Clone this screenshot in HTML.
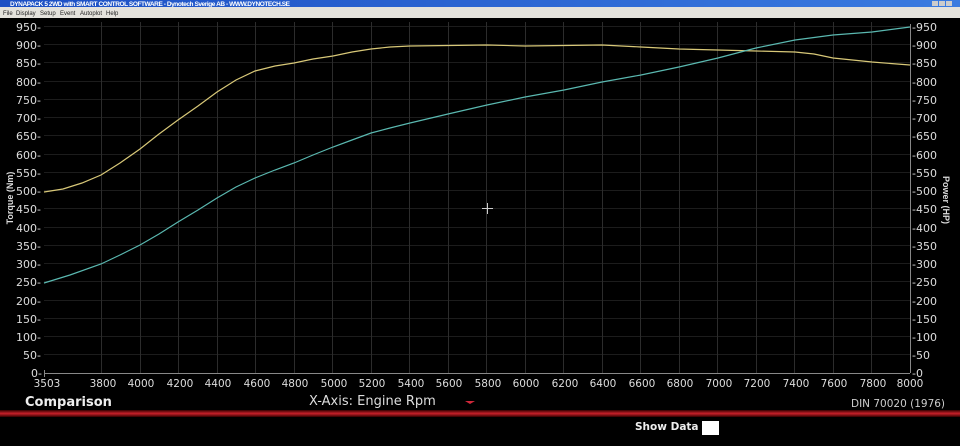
<!DOCTYPE html>
<html><head><meta charset="utf-8"><style>
html,body{margin:0;padding:0;background:#000;width:960px;height:446px;overflow:hidden;font-family:"DejaVu Sans","Liberation Sans",sans-serif}
</style></head><body>
<svg width="960" height="446" xmlns="http://www.w3.org/2000/svg" style="position:absolute;left:0;top:0">
<defs><linearGradient id="tb" x1="0" x2="1"><stop offset="0" stop-color="#1c4fc4"/><stop offset="1" stop-color="#3a7be0"/></linearGradient>
<linearGradient id="rl" x1="0" y1="0" x2="0" y2="1"><stop offset="0" stop-color="#300"/><stop offset="0.5" stop-color="#c8202a"/><stop offset="1" stop-color="#300"/></linearGradient></defs>
<rect x="0" y="0" width="960" height="7" fill="url(#tb)"/>
<text x="10" y="6" font-size="6.5" fill="#fff" font-weight="bold" font-family="Liberation Sans,sans-serif" textLength="280">DYNAPACK 5 2WD with SMART CONTROL SOFTWARE - Dynotech Sverige AB   -   WWW.DYNOTECH.SE</text>
<rect x="932" y="1" width="6" height="5" fill="#ccc"/><rect x="939" y="1" width="6" height="5" fill="#ccc"/><rect x="946" y="1" width="6" height="5" fill="#ccc"/>
<rect x="0" y="7" width="960" height="11" fill="#e4e2dc"/>
<g font-size="6" fill="#222" font-family="Liberation Sans,sans-serif"><text x="3" y="15">File</text><text x="16" y="15">Display</text><text x="40" y="15">Setup</text><text x="60" y="15">Event</text><text x="80" y="15">Autoplot</text><text x="106" y="15">Help</text></g>
<g stroke="#1c1c1c" stroke-width="1">
<line x1="44" x2="910" y1="26.5" y2="26.5"/><line x1="44" x2="910" y1="44.5" y2="44.5"/><line x1="44" x2="910" y1="62.5" y2="62.5"/><line x1="44" x2="910" y1="81.5" y2="81.5"/><line x1="44" x2="910" y1="99.5" y2="99.5"/><line x1="44" x2="910" y1="117.5" y2="117.5"/><line x1="44" x2="910" y1="135.5" y2="135.5"/><line x1="44" x2="910" y1="154.5" y2="154.5"/><line x1="44" x2="910" y1="172.5" y2="172.5"/><line x1="44" x2="910" y1="190.5" y2="190.5"/><line x1="44" x2="910" y1="208.5" y2="208.5"/><line x1="44" x2="910" y1="227.5" y2="227.5"/><line x1="44" x2="910" y1="245.5" y2="245.5"/><line x1="44" x2="910" y1="263.5" y2="263.5"/><line x1="44" x2="910" y1="281.5" y2="281.5"/><line x1="44" x2="910" y1="300.5" y2="300.5"/><line x1="44" x2="910" y1="318.5" y2="318.5"/><line x1="44" x2="910" y1="336.5" y2="336.5"/><line x1="44" x2="910" y1="354.5" y2="354.5"/>
</g>
<g stroke="#2c2c2c" stroke-width="1">
<line x1="101.5" x2="101.5" y1="22" y2="373"/><line x1="140.5" x2="140.5" y1="22" y2="373"/><line x1="178.5" x2="178.5" y1="22" y2="373"/><line x1="217.5" x2="217.5" y1="22" y2="373"/><line x1="255.5" x2="255.5" y1="22" y2="373"/><line x1="294.5" x2="294.5" y1="22" y2="373"/><line x1="332.5" x2="332.5" y1="22" y2="373"/><line x1="371.5" x2="371.5" y1="22" y2="373"/><line x1="409.5" x2="409.5" y1="22" y2="373"/><line x1="448.5" x2="448.5" y1="22" y2="373"/><line x1="486.5" x2="486.5" y1="22" y2="373"/><line x1="525.5" x2="525.5" y1="22" y2="373"/><line x1="563.5" x2="563.5" y1="22" y2="373"/><line x1="602.5" x2="602.5" y1="22" y2="373"/><line x1="640.5" x2="640.5" y1="22" y2="373"/><line x1="679.5" x2="679.5" y1="22" y2="373"/><line x1="717.5" x2="717.5" y1="22" y2="373"/><line x1="756.5" x2="756.5" y1="22" y2="373"/><line x1="794.5" x2="794.5" y1="22" y2="373"/><line x1="833.5" x2="833.5" y1="22" y2="373"/><line x1="871.5" x2="871.5" y1="22" y2="373"/>
</g>
<line x1="44" x2="910" y1="373.5" y2="373.5" stroke="#888"/>
<line x1="910.5" x2="910.5" y1="24" y2="373" stroke="#888"/>
<line x1="44.5" x2="44.5" y1="370" y2="377" stroke="#888"/>
<g fill="#ddd" font-size="11" font-family="DejaVu Sans,sans-serif" text-anchor="end">
<text x="41" y="31">950-</text><text x="41" y="49">900-</text><text x="41" y="67">850-</text><text x="41" y="86">800-</text><text x="41" y="104">750-</text><text x="41" y="122">700-</text><text x="41" y="140">650-</text><text x="41" y="159">600-</text><text x="41" y="177">550-</text><text x="41" y="195">500-</text><text x="41" y="213">450-</text><text x="41" y="232">400-</text><text x="41" y="250">350-</text><text x="41" y="268">300-</text><text x="41" y="286">250-</text><text x="41" y="305">200-</text><text x="41" y="323">150-</text><text x="41" y="341">100-</text><text x="41" y="359">50-</text><text x="42" y="377">0-</text>
</g>
<g fill="#ddd" font-size="11" font-family="DejaVu Sans,sans-serif">
<text x="912" y="31">-950</text><text x="912" y="49">-900</text><text x="912" y="67">-850</text><text x="912" y="86">-800</text><text x="912" y="104">-750</text><text x="912" y="122">-700</text><text x="912" y="140">-650</text><text x="912" y="159">-600</text><text x="912" y="177">-550</text><text x="912" y="195">-500</text><text x="912" y="213">-450</text><text x="912" y="232">-400</text><text x="912" y="250">-350</text><text x="912" y="268">-300</text><text x="912" y="286">-250</text><text x="912" y="305">-200</text><text x="912" y="323">-150</text><text x="912" y="341">-100</text><text x="912" y="359">-50</text><text x="912" y="377">-0</text>
</g>
<g fill="#ddd" font-size="10.5" font-family="DejaVu Sans,sans-serif" text-anchor="middle">
<text x="47" y="387">3503</text><text x="103" y="387">3800</text><text x="141" y="387">4000</text><text x="180" y="387">4200</text><text x="218" y="387">4400</text><text x="257" y="387">4600</text><text x="295" y="387">4800</text><text x="334" y="387">5000</text><text x="372" y="387">5200</text><text x="411" y="387">5400</text><text x="449" y="387">5600</text><text x="488" y="387">5800</text><text x="526" y="387">6000</text><text x="565" y="387">6200</text><text x="603" y="387">6400</text><text x="642" y="387">6600</text><text x="680" y="387">6800</text><text x="719" y="387">7000</text><text x="757" y="387">7200</text><text x="796" y="387">7400</text><text x="834" y="387">7600</text><text x="873" y="387">7800</text><text x="910" y="387">8000</text>
</g>
<text transform="translate(13,198) rotate(-90)" fill="#ddd" font-size="9" font-weight="bold" text-anchor="middle" font-family="Liberation Sans,sans-serif">Torque (Nm)</text>
<text transform="translate(943,200) rotate(90)" fill="#ddd" font-size="9" font-weight="bold" text-anchor="middle" font-family="Liberation Sans,sans-serif">Power (HP)</text>
<polyline fill="none" stroke="#d8c878" stroke-width="1.2" points="44,192 63,189 82,183 101,175 120,163 140,149 159,134 178,120 198,106 217,92 236,80 255,71 275,66 294,63 313,59 333,56 352,52 371,49 390,47 410,46 487,45 525,46 602,45 641,47 679,49 756,51 795,52 814,54 833,58 872,62 910,65"/>
<polyline fill="none" stroke="#5ab8b0" stroke-width="1.2" points="44,283 70,275 101,264 120,255 140,245 159,234 178,222 198,210 217,198 236,187 255,178 275,170 294,163 313,155 333,147 352,140 371,133 390,128 410,123 448,114 487,105 525,97 564,90 602,82 641,75 679,67 718,58 756,48 795,40 833,35 872,32 910,27"/>
<g stroke="#ccc" stroke-width="1"><line x1="482" x2="493" y1="208.5" y2="208.5"/><line x1="487.5" x2="487.5" y1="203" y2="214"/></g>
<text x="25" y="406" fill="#eee" font-size="13" font-weight="bold" font-family="DejaVu Sans,sans-serif">Comparison</text>
<text x="309" y="405" fill="#ddd" font-size="13" font-family="DejaVu Sans,sans-serif">X-Axis: Engine Rpm</text>
<polygon points="465,401 475,401 470,404" fill="#d0283a"/>
<text x="851" y="407" fill="#ccc" font-size="10.5" font-family="DejaVu Sans,sans-serif">DIN 70020 (1976)</text>
<rect x="0" y="410" width="960" height="7" fill="url(#rl)"/>
<text x="635" y="430" fill="#eee" font-size="10.5" font-weight="bold" font-family="DejaVu Sans,sans-serif">Show Data</text>
<rect x="702" y="421" width="17" height="14" fill="#fff"/>
</svg>
</body></html>
